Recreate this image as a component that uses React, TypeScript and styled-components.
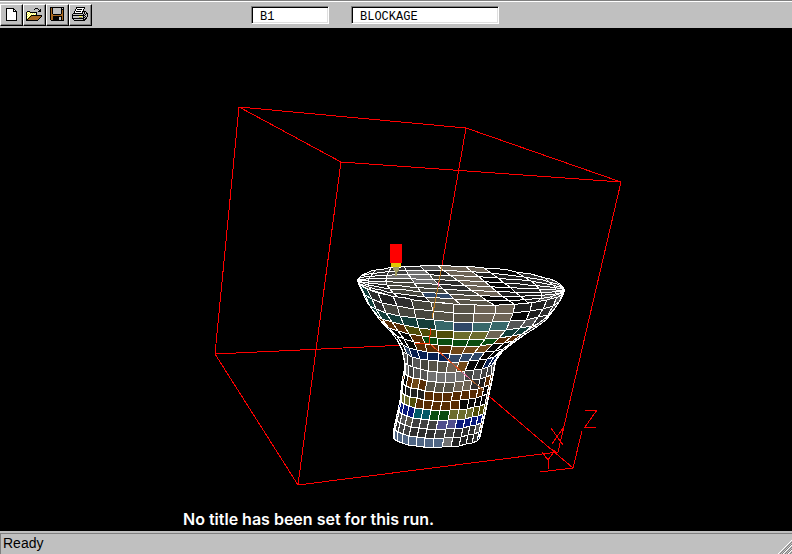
import React from "react";
import styled, { createGlobalStyle } from "styled-components";

const GlobalStyle = createGlobalStyle`
  * { box-sizing: border-box; }
  body { margin: 0; background: #000; font-family: "Liberation Sans", Arial, sans-serif; }
`;

const Window = styled.div`
  display: flex;
  flex-direction: column;
  min-height: 100vh;
  background: #000;
`;

const Toolbar = styled.header`
  display: flex;
  align-items: center;
  height: 28px;
  background: #c0c0c0;
  border-top: 1px solid #808080;
  box-shadow: inset 0 1px #fff;
  padding-top: 1px;
`;

const ButtonGroup = styled.div`
  display: flex;
  margin-right: 159px;
`;

const ToolButton = styled.button`
  display: grid;
  place-items: center;
  width: 23px;
  height: 22px;
  padding: 0 1px 2px 0;
  background: #c0c0c0;
  border: 1px solid;
  border-color: #fff #000 #000 #fff;
  box-shadow: inset -1px -1px #808080;
`;

const Field = styled.input<{ $width: number }>`
  width: ${(p) => p.$width}px;
  height: 18px;
  margin-right: 22px;
  padding: 3px 7px 0 8px;
  border: 1px solid;
  border-color: #808080 #fff #fff #808080;
  box-shadow: inset 1px 1px #000, inset -1px -1px #dfdfdf;
  border-radius: 0;
  outline: none;
  background: #fff;
  color: #000;
  font: 12px "Liberation Mono", "Courier New", monospace;
`;

const Viewport = styled.main`
  display: grid;
  flex: 1;
  min-height: 0;
  background: #000;
`;

const Scene = styled.svg`
  grid-area: 1 / 1;
  display: block;
  width: 100%;
  height: 100%;
`;

const Caption = styled.p`
  grid-area: 1 / 1;
  align-self: end;
  margin: 0;
  padding: 0 0 2px 183px;
  color: #fff;
  font: 600 16px/20px Inter, sans-serif;
`;

const StatusBar = styled.footer`
  display: flex;
  justify-content: space-between;
  align-items: flex-end;
  height: 23px;
  padding-top: 2px;
  background: #c0c0c0;
`;

const StatusText = styled.div`
  flex: 1;
  align-self: stretch;
  padding-left: 2px;
  border-top: 1px solid #808080;
  border-left: 1px solid #808080;
  font-size: 14px;
  line-height: 18px;
  color: #000;
`;

const GripBox = styled.div`
  display: flex;
  align-items: flex-end;
  align-self: stretch;
  border-top: 1px solid #808080;
`;

const inks: Record<string, string> = {
  k: "#000000",
  w: "#ffffff",
  y: "#ffff40",
  o: "#a86820",
  g: "#c0c0c0",
  d: "#808080",
};

const iconRows = {
  create: [
    "...kkkkkkkk.....",
    "...kwwwwwwkk....",
    "...kwwwwwwkwk...",
    "...kwwwwwwkkkk..",
    "...kwwwwwwwwwk..",
    "...kwwwwwwwwwk..",
    "...kwwwwwwwwwk..",
    "...kwwwwwwwwwk..",
    "...kwwwwwwwwwk..",
    "...kwwwwwwwwwk..",
    "...kwwwwwwwwwk..",
    "...kwwwwwwwwwk..",
    "...kkkkkkkkkkk..",
  ],
  open: [
    ".........kkk....",
    "........k...k.k.",
    ".............kk.",
    ".kkk........kkk.",
    "kywykkkkkkk.....",
    "kwywywywywk.....",
    "kywywywywyk.....",
    "kwywykkkkkkkkkkk",
    "kywykooooooooook",
    "kwykooooooooook.",
    "kykooooooooook..",
    "kkooooooooook...",
    "kkkkkkkkkkkk....",
  ],
  save: [
    "kkkkkkkkkkkkkk",
    "kokggggggggkgk",
    "kokggggggggkkk",
    "kokggggggggkok",
    "kokggggggggkok",
    "kokggggggggkok",
    "kokggggggggkok",
    "kookkkkkkkkook",
    "kooooooooooook",
    "kookkkkkkkkkok",
    "kookkkkkkggkok",
    "kookkkkkkggkok",
    "kookkkkkkggkok",
    ".kkkkkkkkkkkkk",
  ],
  print: [
    "....kkkkkkkkk...",
    "....kwwwwwwwk...",
    "...kwkkkkkwk....",
    "...kwwwwwwwk....",
    "..kwkkkkkwkkkk..",
    "..kwwwwwwwkgkgk.",
    ".kkkkkkkkkkgkgkk",
    "kggggggggggkgkgk",
    "kkkkkkkkkkkkkggk",
    "kggggggyyygkgkgk",
    "kggggggdddgkkgk.",
    "kkkkkkkkkkkkgkk.",
    ".kgggggggggkkk..",
    "..kkkkkkkkkkk...",
  ],
};

function PixelIcon({ rows }: { rows: string[] }) {
  const width = rows[0].length;
  return (
    <svg width={width} height={rows.length} shapeRendering="crispEdges" aria-hidden="true">
      {rows.flatMap((row, y) =>
        [...row].map((c, x) =>
          c === "." ? null : <rect key={`${x}-${y}`} x={x} y={y} width={1} height={1} fill={inks[c]} />
        )
      )}
    </svg>
  );
}

const shades: Record<string, string> = {
  k: "#060606",
  j: "#202020",
  d: "#2e2e2e",
  e: "#404040",
  g: "#555555",
  h: "#727272",
  s: "#46463e",
  t: "#585448",
  u: "#6e6456",
  c: "#143e3a",
  C: "#38686a",
  b: "#304868",
  B: "#506684",
  n: "#0a2050",
  N: "#08187c",
  o: "#504c08",
  O: "#6c6c2c",
  G: "#0a4c10",
  r: "#582c04",
  R: "#704818",
  T: "#005866",
  p: "#504e8c",
};

type Ring = [left: number, right: number, middle: number, sag: number];

const rings: Ring[] = [
  [357, 565, 285, 19],
  [362, 561, 295, 18],
  [367, 555, 305, 17],
  [374, 547, 314, 17],
  [382, 536, 323, 16],
  [390, 525, 331, 15],
  [397, 513, 340, 14],
  [402, 503, 349, 13],
  [404, 496, 360, 12],
  [404, 494, 371, 11],
  [402, 492, 381, 11],
  [401, 490, 390, 11],
  [400, 488, 400, 10],
  [398, 486, 410, 10],
  [396, 484, 419, 10],
  [394, 482, 428, 10],
  [393, 480, 437, 10],
];

const bodyShades = [
  "tucdjdsttuujjdgg",
  "cccdsssttuukjdeg",
  "gccccccCbCCggddg",
  "oGrrroooOOuccrjg",
  "rbbkkrGGGGGrrcke",
  "bgkkkrrrRRRkkrre",
  "ggkbnnnnbbbkkrcg",
  "ghgdgsttuRkknnge",
  "ghhegghhhhegeegg",
  "grkrRrtttuudjrrj",
  "rkkjjjrrrrrrrkRk",
  "oOOOorrrrrkkkkuc",
  "NNNNNTTGGOOOooOc",
  "gbegteeeppNNNNnr",
  "egdeedddeedddgrj",
  "hBBBBBBBBhjjjdng",
];

type Point = [number, number];

function ringPoint(index: number, angle: number): Point {
  const [left, right, middle, sag] = rings[index];
  const radius = (right - left) / 2;
  const a = Math.max(-Math.PI / 2, Math.min(Math.PI / 2, angle));
  const offset = radius * Math.sin(a);
  const tilt = index < 8 ? 0.048 * (1 - index / 8) : 0;
  return [(left + right) / 2 + offset, middle + offset * tilt + sag * Math.cos(a)];
}

const toPoints = (points: Point[]) =>
  points.map(([x, y]) => `${Math.round(x)},${Math.round(y)}`).join(" ");

const step = (Math.PI * 2) / 30;

function Body() {
  return (
    <g stroke="#fff">
      {bodyShades.flatMap((row, i) =>
        [...row].map((shade, j) => {
          const from = -0.08 + (j - 8) * step;
          return (
            <polygon
              key={`${i}-${j}`}
              fill={shades[shade]}
              points={toPoints([
                ringPoint(i, from),
                ringPoint(i, from + step),
                ringPoint(i + 1, from + step),
                ringPoint(i + 1, from),
              ])}
            />
          );
        })
      )}
    </g>
  );
}

const seams = [
  [357, 357, 357],
  [376, 368, 371],
  [392, 386, 398],
  [404, 414, 430],
  [420, 438, 460],
  [437, 464, 494],
  [465, 490, 514],
  [484, 510, 528],
  [516, 539, 538],
  [545, 556, 550],
  [565, 565, 565],
];

const lidShades = [
  "ddddguukde",
  "jdehjujjde",
  "ddhhsukjdg",
  "edshdukjeg",
  "dgssdukjgg",
  "ejsssujjeg",
  "edsbtkkjgg",
  "tdjttkkjgg",
];

function lidPoint(seam: number, v: number): Point {
  const base = Math.min(Math.floor(seam), seams.length - 2);
  const mix = seam - base;
  const xs = seams[base].map((x, i) => x + (seams[base + 1][i] - x) * mix);
  const x = (1 - v) * (1 - 2 * v) * xs[0] + 4 * v * (1 - v) * xs[1] + v * (2 * v - 1) * xs[2];
  const offset = Math.max(-104, Math.min(104, x - 461));
  const half = 19 * Math.sqrt(1 - (offset / 104) ** 2);
  return [461 + offset, 285 + offset * 0.048 + half * (2 * v - 1)];
}

const quarters = [0, 0.25, 0.5, 0.75, 1];

function Lid() {
  return (
    <g stroke="#fff">
      {lidShades.flatMap((row, i) =>
        [...row].map((shade, j) => {
          const v0 = i / lidShades.length;
          const v1 = (i + 1) / lidShades.length;
          const upper = quarters.map((q) => lidPoint(j + q, v0));
          const lower = quarters.map((q) => lidPoint(j + 1 - q, v1));
          return <polygon key={`${i}-${j}`} fill={shades[shade]} points={toPoints([...upper, ...lower])} />;
        })
      )}
    </g>
  );
}

function Domain() {
  return (
    <g stroke="#f00" fill="none">
      <path d="M239 107L466 128L621 182L341 162Z" />
      <path d="M239 107L215 354L298 485L341 162" />
      <path d="M621 182L558 452L298 485" />
      <path d="M466 128L442 266M215 354L428 344" />
      <path d="M428 344L573 468L582 431M573 468L540 472M549 448L558 453" />
      <path d="M551 428L563 445M563 428L552 444" />
      <path d="M542 452L548 460L554 452M548 460V469" />
      <path d="M585 410H597L585 427H596" />
    </g>
  );
}

function Model() {
  return (
    <Scene viewBox="0 28 792 503" shapeRendering="crispEdges" role="img" aria-label="Blockage model in wireframe domain">
      <Domain />
      <Body />
      <Lid />
      <g fill="none">
        <path d="M442 266L432 318" stroke="#b87820" />
        <path d="M439 282L438 287" stroke="#ff7090" />
        <path d="M431 328L429 343L415 344" stroke="#f03000" />
        <path d="M429 343L462 372" stroke="#e05020" />
        <path d="M462 372L470 379" stroke="#e070a0" />
        <path d="M470 379L484 391" stroke="#a06030" />
      </g>
      <rect x={390} y={244} width={12} height={19} fill="#f00" />
      <rect x={391} y={263} width={10} height={4} fill="#e0c800" />
      <path d="M393 267H399V270L397 272V276H395V272L393 270Z" fill="#a09c60" />
    </Scene>
  );
}

function Grip() {
  return (
    <svg width="14" height="14" aria-hidden="true">
      <path d="M0 14L14 0M5 14L14 5M10 14L14 10" stroke="#fff" />
      <path d="M1 15L15 1M3 15L15 3M6 15L15 6M8 15L15 8M11 15L15 11" stroke="#808080" />
    </svg>
  );
}

export default function App() {
  return (
    <Window>
      <GlobalStyle />
      <Toolbar>
        <ButtonGroup>
          <ToolButton type="button" aria-label="New"><PixelIcon rows={iconRows.create} /></ToolButton>
          <ToolButton type="button" aria-label="Open"><PixelIcon rows={iconRows.open} /></ToolButton>
          <ToolButton type="button" aria-label="Save"><PixelIcon rows={iconRows.save} /></ToolButton>
          <ToolButton type="button" aria-label="Print"><PixelIcon rows={iconRows.print} /></ToolButton>
        </ButtonGroup>
        <Field $width={78} aria-label="Object name" defaultValue="B1" />
        <Field $width={148} aria-label="Object type" defaultValue="BLOCKAGE" />
      </Toolbar>
      <Viewport>
        <Model />
        <Caption>No title has been set for this run.</Caption>
      </Viewport>
      <StatusBar>
        <StatusText role="status">Ready</StatusText>
        <GripBox><Grip /></GripBox>
      </StatusBar>
    </Window>
  );
}
